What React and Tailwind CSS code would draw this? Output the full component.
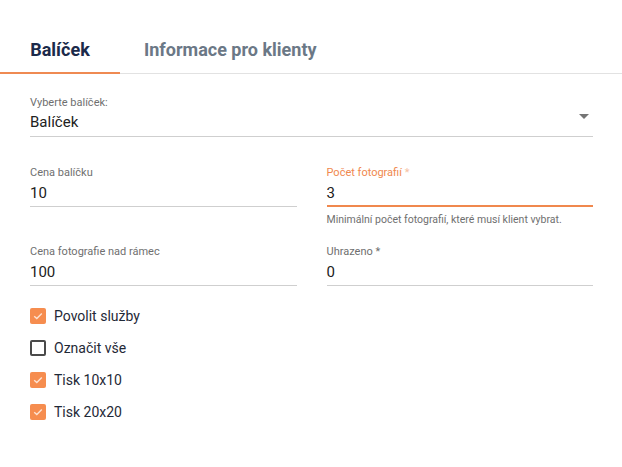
import { useState } from 'react'

function Field({ label, value, focused, helper, required }) {
  return (
    <div>
      <div
        className={`text-[11px] leading-[14px] ${focused ? 'text-[#f0884e]' : 'text-[#6f6f6f]'}`}
      >
        {label}
        {required && <span className={focused ? 'text-[#f6c2a3]' : ''}> *</span>}
      </div>
      <div
        className={`mt-[3px] text-[15px] leading-[20px] text-[#212121] ${
          focused ? 'pb-[2px] border-b-2 border-[#f0884e]' : 'pb-[3px] border-b border-[#cfcfcf]'
        }`}
      >
        {value}
      </div>
      {helper && (
        <div className="mt-[6px] text-[10.5px] leading-[14px] text-[#6f6f6f]">{helper}</div>
      )}
    </div>
  )
}

function Checkbox({ checked, label, onToggle }) {
  return (
    <label className="flex items-center h-[32px] cursor-pointer" onClick={onToggle}>
      {checked ? (
        <span className="w-[16px] h-[16px] rounded-[2px] bg-[#f68d4f] flex items-center justify-center">
          <svg width="12" height="12" viewBox="0 0 12 12" fill="none">
            <path d="M2.2 6.2 L4.8 8.6 L9.8 3.4" stroke="#fde3d3" strokeWidth="1.4" />
          </svg>
        </span>
      ) : (
        <span className="w-[16px] h-[16px] rounded-[2px] border-2 border-[#4a4a4a]" />
      )}
      <span className="ml-[8px] text-[14px] text-[#1f2937]">{label}</span>
    </label>
  )
}

export default function App() {
  const [tab, setTab] = useState(0)
  const [checks, setChecks] = useState([true, false, true, true])
  const items = ['Povolit služby', 'Označit vše', 'Tisk 10x10', 'Tisk 20x20']

  return (
    <div className="w-[622px] h-[467px] bg-white font-['Roboto',sans-serif] overflow-hidden">
      {/* tabs */}
      <div className="pt-[26px] flex border-b border-[#e2e2e2]">
        <button
          onClick={() => setTab(0)}
          className={`h-[48px] w-[120px] -mb-px text-[18px] font-bold border-b-2 ${
            tab === 0 ? 'text-[#1b2a4a] border-[#ef8a52]' : 'text-[#6b7886] border-transparent'
          }`}
        >
          Balíček
        </button>
        <button
          onClick={() => setTab(1)}
          className={`h-[48px] px-[24px] -mb-px text-[18px] font-bold border-b-2 ${
            tab === 1 ? 'text-[#1b2a4a] border-[#ef8a52]' : 'text-[#6b7886] border-transparent'
          }`}
        >
          Informace pro klienty
        </button>
      </div>

      <div className="px-[30px] w-[623px]">
        {/* package select */}
        <div className="mt-[22px]">
          <div className="text-[11px] leading-[14px] text-[#6f6f6f]">Vyberte balíček:</div>
          <div className="mt-[2px] pb-[4px] flex items-center justify-between border-b border-[#cfcfcf]">
            <span className="text-[15px] leading-[20px] text-[#212121]">Balíček</span>
            <svg width="10" height="5" viewBox="0 0 10 5" className="mr-[4px] -mt-[12px]">
              <path d="M0 0 L10 0 L5 5 Z" fill="#757575" />
            </svg>
          </div>
        </div>

        <div className="mt-[29px] grid grid-cols-2 gap-x-[30px]">
          <Field label="Cena balíčku" value="10" />
          <Field
            label="Počet fotografií"
            value="3"
            focused
            required
            helper="Minimální počet fotografií, které musí klient vybrat."
          />
        </div>

        <div className="mt-[18px] grid grid-cols-2 gap-x-[30px]">
          <Field label="Cena fotografie nad rámec" value="100" />
          <Field label="Uhrazeno *" value="0" />
        </div>

        <div className="mt-[14px]">
          {items.map((it, i) => (
            <Checkbox
              key={it}
              label={it}
              checked={checks[i]}
              onToggle={(e) => {
                e.preventDefault()
                setChecks(checks.map((c, j) => (j === i ? !c : c)))
              }}
            />
          ))}
        </div>
      </div>
    </div>
  )
}
